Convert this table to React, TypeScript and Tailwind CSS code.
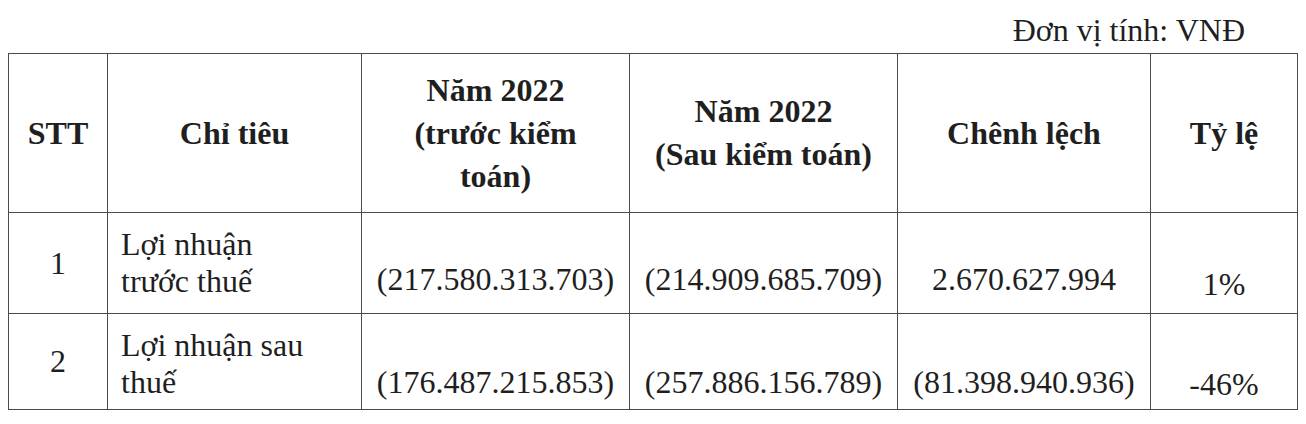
const cols = [99, 254, 268, 268, 253, 147];

const rows = [
  {
    stt: '1',
    name: ['Lợi nhuận', 'trước thuế'],
    before: '(217.580.313.703)',
    after: '(214.909.685.709)',
    diff: '2.670.627.994',
    rate: '1%',
    height: 'h-[101px]',
    pt: 'pt-[13px]',
    pb: 'pb-[15px]',
    pbRate: 'pb-[10px]',
  },
  {
    stt: '2',
    name: ['Lợi nhuận sau', 'thuế'],
    before: '(176.487.215.853)',
    after: '(257.886.156.789)',
    diff: '(81.398.940.936)',
    rate: '-46%',
    height: 'h-[96px]',
    pt: 'pt-[13px]',
    pb: 'pb-[8px]',
    pbRate: 'pb-[6px]',
  },
];

const cell = 'border border-[#4a4a4a] p-0';

export default function App() {
  return (
    <div
      className="min-h-[424px] w-[1306px] bg-white pl-[8px] text-[#1f1f1f]"
      style={{ fontFamily: '"Liberation Serif", "DejaVu Serif", serif' }}
    >
      <div className="flex justify-end pr-[61px] pt-[12px] pb-[4px] text-[32px] leading-[37px]">
        Đơn vị tính: VNĐ
      </div>

      <table className="table-fixed border-collapse text-[32px] leading-[37px]">
        <colgroup>
          {cols.map((w, i) => (
            <col key={i} style={{ width: w }} />
          ))}
        </colgroup>
        <thead>
          <tr className="h-[159px] text-center font-bold leading-[43px]">
            <th className={cell}>STT</th>
            <th className={cell}>Chỉ tiêu</th>
            <th className={cell}>
              Năm 2022
              <br />
              (trước kiểm
              <br />
              toán)
            </th>
            <th className={cell}>
              Năm 2022
              <br />
              (Sau kiểm toán)
            </th>
            <th className={cell}>Chênh lệch</th>
            <th className={cell}>Tỷ lệ</th>
          </tr>
        </thead>
        <tbody>
          {rows.map((r) => (
            <tr key={r.stt} className={r.height}>
              <td className={`${cell} text-center align-middle`}>{r.stt}</td>
              <td className={`${cell} align-top pl-[13px] ${r.pt}`}>
                {r.name[0]}
                <br />
                {r.name[1]}
              </td>
              <td className={`${cell} text-center align-bottom ${r.pb}`}>{r.before}</td>
              <td className={`${cell} text-center align-bottom ${r.pb}`}>{r.after}</td>
              <td className={`${cell} text-center align-bottom ${r.pb}`}>{r.diff}</td>
              <td className={`${cell} text-center align-bottom ${r.pbRate}`}>{r.rate}</td>
            </tr>
          ))}
        </tbody>
      </table>
    </div>
  );
}
